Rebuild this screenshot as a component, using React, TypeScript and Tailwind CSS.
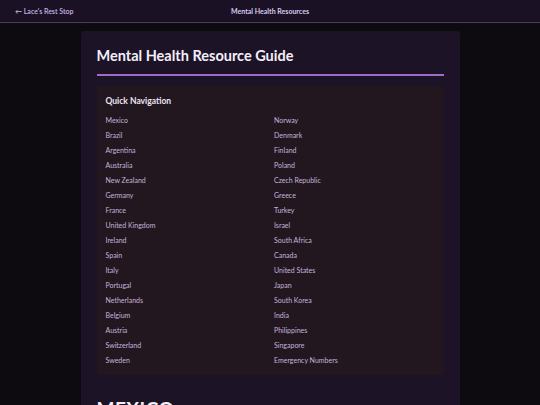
const left = [
  'Mexico', 'Brazil', 'Argentina', 'Australia', 'New Zealand', 'Germany', 'France',
  'United Kingdom', 'Ireland', 'Spain', 'Italy', 'Portugal', 'Netherlands', 'Belgium',
  'Austria', 'Switzerland', 'Sweden',
];

const right = [
  'Norway', 'Denmark', 'Finland', 'Poland', 'Czech Republic', 'Greece', 'Turkey',
  'Israel', 'South Africa', 'Canada', 'United States', 'Japan', 'South Korea', 'India',
  'Philippines', 'Singapore', 'Emergency Numbers',
];

function NavList({ items }: { items: string[] }) {
  return (
    <ul className="flex flex-col">
      {items.map((c) => (
        <li key={c} className="h-[15px] flex items-center">
          <a href="#" className="text-[7px] text-[#c4b3dc] leading-none">{c}</a>
        </li>
      ))}
    </ul>
  );
}

export default function App() {
  return (
    <div
      className="min-h-screen bg-[#0e0b10] text-white"
      style={{ fontFamily: 'Lato, "Noto Sans", sans-serif' }}
    >
      <nav className="h-[23px] bg-[#1a1224] border-b border-[#4b3a5c] grid grid-cols-3 items-center px-[15px]">
        <a href="#" className="text-[7px] text-[#c9b6e4] font-semibold">← Lace's Rest Stop</a>
        <span className="text-[7px] text-[#d8c8ee] font-bold text-center">Mental Health Resources</span>
        <span />
      </nav>

      <main className="pt-[8px]">
        <div className="mx-auto w-[379px] bg-[#1c1426] rounded-[3px] px-[16px] pt-[16px] pb-4">
          <h1 className="text-[14.5px] font-bold leading-none pt-[2px] pb-[10px] border-b-2 border-[#9d6ec8] text-[#f4eefa]">
            Mental Health Resource Guide
          </h1>

          <section className="mt-[10px] bg-[#22171f] rounded-[3px] px-[9px] pt-[11px] pb-[7px]">
            <h2 className="text-[8.5px] font-bold text-[#ece4f4] leading-none mb-[8px]">Quick Navigation</h2>
            <div className="grid grid-cols-2 gap-x-2">
              <NavList items={left} />
              <NavList items={right} />
            </div>
          </section>

          <h2 className="mt-[24px] text-[19px] font-bold leading-none text-[#f4eefa] tracking-wide">MEXICO</h2>
        </div>
      </main>
    </div>
  );
}
